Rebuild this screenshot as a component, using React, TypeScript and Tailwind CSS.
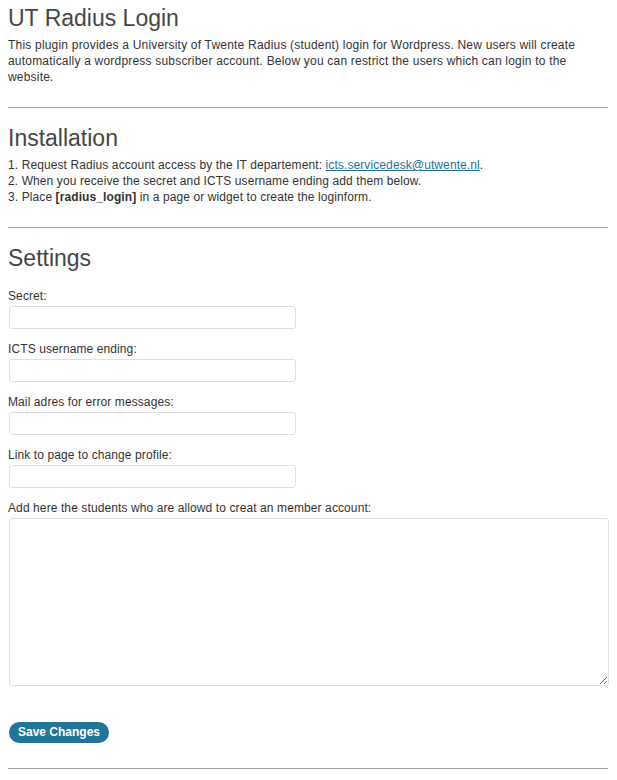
export default function App() {
  const fields = [
    "Secret:",
    "ICTS username ending:",
    "Mail adres for error messages:",
    "Link to page to change profile:",
  ];

  return (
    <div className="w-[617px] min-h-[780px] bg-white pl-2 pr-[9px] pt-1 text-[12px] leading-4 tracking-[0.1px] text-[#333] font-['Liberation_Sans',Arial,sans-serif]">
      <h2 className="text-[23px] leading-[29px] tracking-normal text-[#464646]">UT Radius Login</h2>
      <p className="mt-1 tracking-[0.2px]">
        This plugin provides a University of Twente Radius (student) login for Wordpress. New users will create
        automatically a wordpress subscriber account. Below you can restrict the users which can login to the
        website.
      </p>
      <hr className="mt-[22px] border-t border-[#a3a3a3]" />

      <h2 className="mt-4 text-[23px] leading-[29px] tracking-normal text-[#464646]">Installation</h2>
      <p className="mt-1">
        1. Request Radius account access by the IT departement:{" "}
        <a href="#" className="text-[#21759b] underline">
          icts.servicedesk@utwente.nl
        </a>
        .
        <br />
        2. When you receive the secret and ICTS username ending add them below.
        <br />
        3. Place <strong>[radius_login]</strong> in a page or widget to create the loginform.
      </p>
      <hr className="mt-[22px] border-t border-[#a3a3a3]" />

      <h2 className="mt-4 text-[23px] leading-[29px] tracking-normal text-[#464646]">Settings</h2>
      <form className="mt-[15px]" onSubmit={(e) => e.preventDefault()}>
        {fields.map((label) => (
          <div key={label} className="mb-3">
            <label className="block">{label}</label>
            <input
              type="text"
              className="mt-[2px] ml-px block h-[23px] w-[287px] rounded-[3px] border border-[#dfdfdf] bg-white px-1 outline-none"
            />
          </div>
        ))}
        <label className="block">Add here the students who are allowd to creat an member account:</label>
        <textarea className="mt-[2px] ml-px block h-[168px] w-[600px] rounded-[3px] border border-[#dfdfdf] bg-white p-1 outline-none" />
        <button
          type="submit"
          className="mt-9 ml-px h-[21px] rounded-full bg-[#21759b] px-[9px] text-[12px] font-bold leading-[21px] tracking-normal text-white"
        >
          Save Changes
        </button>
      </form>
      <hr className="mt-[25px] border-t border-[#a3a3a3]" />
    </div>
  );
}
